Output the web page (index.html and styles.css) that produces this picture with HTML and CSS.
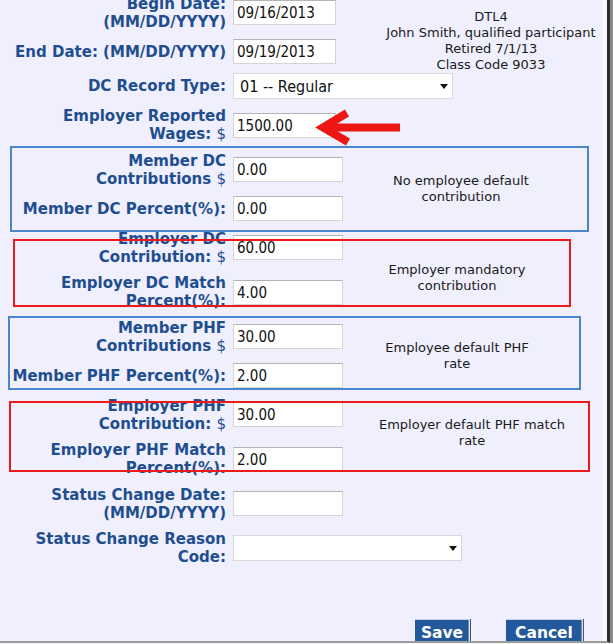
FILE: index.html
```html
<!DOCTYPE html>
<html lang="en">
<head>
<meta charset="utf-8">
<title>DC Record</title>
<link rel="stylesheet" href="styles.css">
</head>
<body>
<div class="frame">
  <form class="form">
    <div class="note note-dtl">DTL4<br>John Smith, qualified participant<br>Retired 7/1/13<br>Class Code 9033</div>
    <div class="note note-mdc">No employee default<br>contribution</div>
    <div class="note note-edc">Employer mandatory<br>contribution</div>
    <div class="note note-mphf">Employee default PHF<br>rate</div>
    <div class="note note-ephf">Employer default PHF match<br>rate</div>

    <label class="lbl">Begin Date:<br>(MM/DD/YYYY)</label>
    <input class="field date" value="09/16/2013">

    <label class="lbl">End Date: (MM/DD/YYYY)</label>
    <input class="field date" value="09/19/2013">

    <label class="lbl">DC Record Type:</label>
    <div class="select-wrap"><select><option>01 -- Regular</option></select></div>

    <label class="lbl">Employer Reported<br>Wages: <span class="cur">$</span></label>
    <input class="field date" value="1500.00">

    <label class="lbl">Member DC<br>Contributions <span class="cur">$</span></label>
    <input class="field" value="0.00">

    <label class="lbl">Member DC Percent(%):</label>
    <input class="field" value="0.00">

    <label class="lbl">Employer DC<br>Contribution: <span class="cur">$</span></label>
    <input class="field" value="60.00">

    <label class="lbl">Employer DC Match<br>Percent(%):</label>
    <input class="field" value="4.00">

    <label class="lbl">Member PHF<br>Contributions <span class="cur">$</span></label>
    <input class="field" value="30.00">

    <label class="lbl">Member PHF Percent(%):</label>
    <input class="field" value="2.00">

    <label class="lbl">Employer PHF<br>Contribution: <span class="cur">$</span></label>
    <input class="field" value="30.00">

    <label class="lbl">Employer PHF Match<br>Percent(%):</label>
    <input class="field" value="2.00">

    <label class="lbl">Status Change Date:<br>(MM/DD/YYYY)</label>
    <input class="field" value="">

    <label class="lbl">Status Change Reason<br>Code:</label>
    <div class="select-wrap wide"><select><option></option></select></div>
  </form>

  <div class="actions">
    <button type="button" class="btn btn-save">Save</button>
    <button type="button" class="btn btn-cancel">Cancel</button>
  </div>

  <div class="box box-blue box-1"></div>
  <div class="box box-red box-2"></div>
  <div class="box box-blue box-3"></div>
  <div class="box box-red box-4"></div>

  <svg class="arrow" width="100" height="50" viewBox="0 0 100 50" aria-hidden="true">
    <line x1="20" y1="27.5" x2="95" y2="27.5" stroke="#ee1515" stroke-width="8"/>
    <polyline points="42,13 18,27.5 43,42" fill="none" stroke="#ee1515" stroke-width="8" stroke-linejoin="miter"/>
  </svg>
</div>
</body>
</html>
```

FILE: styles.css
```css
html, body {
  margin: 0;
  padding: 0;
  background: #f4f4f4;
}

.frame {
  position: relative;
  width: 607px;
  height: 641px;
  overflow: hidden;
  background: linear-gradient(to right, #efeffd 0, #efeffd 603px, #f7f7ff 603px);
  border-right: 3px solid #2b2b2b;
  border-bottom: 2px solid #9c9c9c;
  box-shadow: 3px 0 0 #8a8a8a;
}

.form {
  display: grid;
  grid-template-columns: 226px 110px 1fr;
  column-gap: 7px;
  row-gap: 8.5px;
  align-items: center;
  margin-top: -5.5px;
  font-family: "DejaVu Sans", Verdana, sans-serif;
}

.lbl {
  grid-column: 1;
  text-align: right;
  font-weight: bold;
  font-size: 15px;
  line-height: 18px;
  color: #1f4e8e;
  white-space: nowrap;
}

.cur {
  font-weight: normal;
}

.field {
  grid-column: 2;
  box-sizing: border-box;
  width: 110px;
  height: 25px;
  margin: 0;
  padding: 1px 0 0 3px;
  border: 1px solid #d4d4d4;
  border-top-color: #b4b4b4;
  border-radius: 0;
  background: #fff;
  font-family: "DejaVu Sans Condensed", "DejaVu Sans", sans-serif;
  font-stretch: condensed;
  font-size: 15px;
  color: #111;
  outline: none;
}

.field.date {
  width: 103px;
}

.select-wrap {
  grid-column: 2;
  justify-self: start;
  position: relative;
  width: 220px;
  height: 26px;
}

.select-wrap.wide {
  width: 229px;
}

.select-wrap select {
  appearance: none;
  -webkit-appearance: none;
  box-sizing: border-box;
  width: 100%;
  height: 100%;
  margin: 0;
  padding: 1px 0 0 6px;
  border: 1px solid #dadada;
  border-radius: 0;
  background: #fff;
  font-family: "DejaVu Sans Condensed", "DejaVu Sans", sans-serif;
  font-stretch: condensed;
  font-size: 16px;
  color: #111;
}

.select-wrap::after {
  content: "";
  position: absolute;
  right: 5px;
  top: 11px;
  border-left: 4px solid transparent;
  border-right: 4px solid transparent;
  border-top: 5px solid #111;
}

.note {
  grid-column: 3;
  align-self: start;
  justify-self: center;
  text-align: center;
  font-family: "DejaVu Sans", Verdana, sans-serif;
  font-size: 13px;
  line-height: 16px;
  color: #1a1a1a;
  white-space: nowrap;
}

.note-dtl {
  grid-row: 1 / span 3;
  margin-top: 14.5px;
  margin-left: 25px;
}

.note-mdc {
  grid-row: 5 / span 2;
  margin-top: 21.5px;
  margin-right: 35px;
}

.note-edc {
  grid-row: 7 / span 2;
  margin-top: 32.5px;
  margin-right: 43px;
}

.note-mphf {
  grid-row: 9 / span 2;
  margin-top: 21.5px;
  margin-right: 43px;
}

.note-ephf {
  grid-row: 11 / span 2;
  margin-top: 20.5px;
  margin-right: 13px;
}

.actions {
  display: flex;
  justify-content: flex-end;
  gap: 37px;
  padding-right: 25px;
  margin-top: 53px;
}

.btn {
  box-sizing: border-box;
  height: 27px;
  margin: 0;
  padding: 5px 0 4px;
  border: 0;
  border-radius: 0;
  background: #22589c;
  color: #fff;
  font-family: "DejaVu Sans", Verdana, sans-serif;
  font-weight: bold;
  font-size: 15.5px;
  line-height: 18px;
  text-align: center;
  box-shadow: inset 0 1px 0 #c9d3e3, inset -1px 0 0 #6f8fb9, 1px 0 0 #dfe3ea, 2px 0 0 #555;
}

.btn-save {
  width: 54px;
}

.btn-cancel {
  width: 76px;
}

.box {
  position: absolute;
  box-sizing: border-box;
  border: 2px solid;
  pointer-events: none;
}

.box-blue {
  border-color: #4b87c8;
}

.box-red {
  border-color: #ec1a1a;
}

.box-1 { left: 10px; top: 146px; width: 579px; height: 86px; }
.box-2 { left: 13px; top: 239px; width: 558px; height: 68px; }
.box-3 { left: 8px;  top: 316px; width: 573px; height: 74px; }
.box-4 { left: 9px;  top: 401px; width: 581px; height: 71px; }

.arrow {
  position: absolute;
  left: 305px;
  top: 100px;
}
```
